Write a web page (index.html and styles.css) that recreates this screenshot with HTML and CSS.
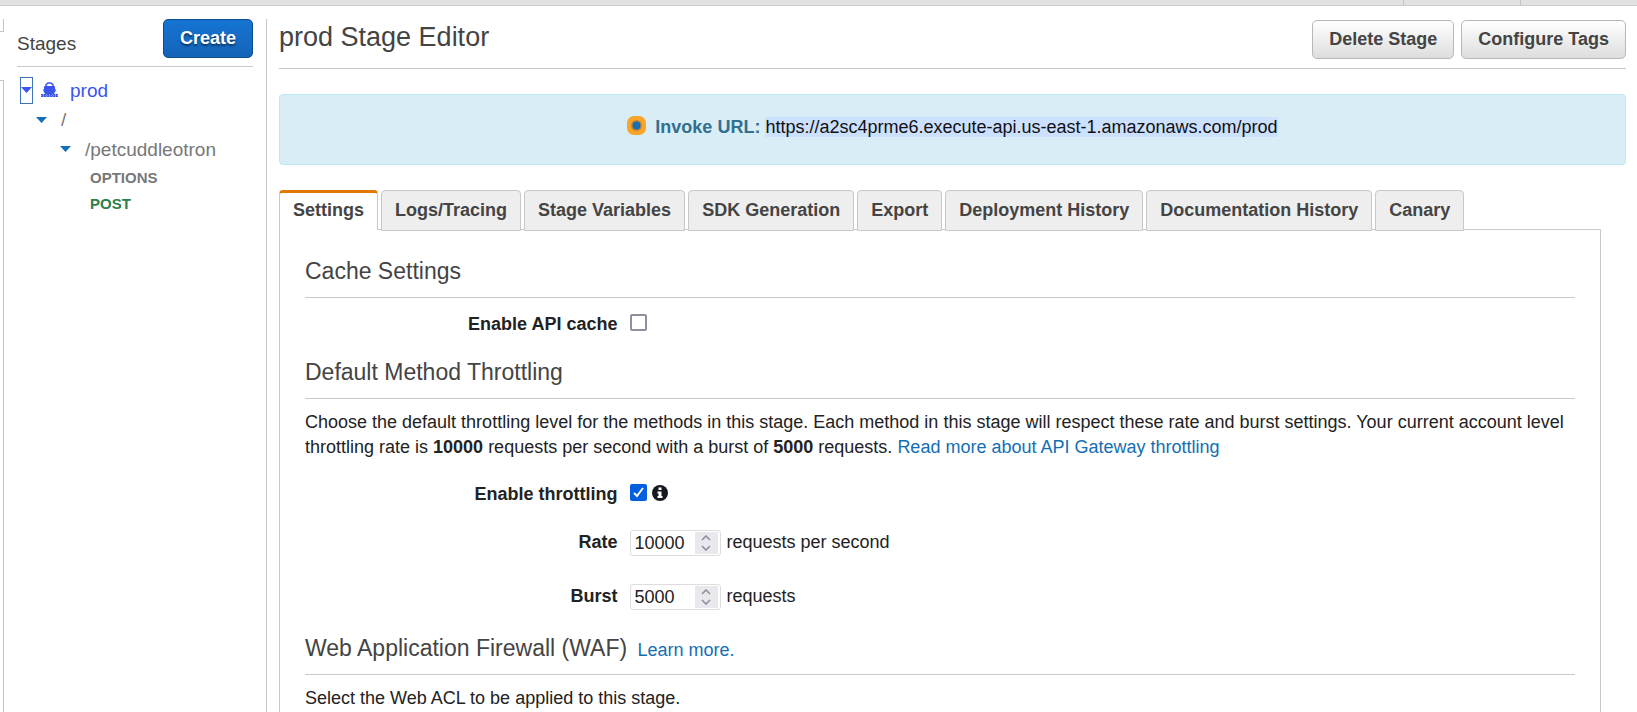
FILE: index.html
```html
<!DOCTYPE html>
<html lang="en">
<head>
<meta charset="utf-8">
<title>prod Stage Editor</title>
<link rel="stylesheet" href="styles.css">
</head>
<body>
<header class="topbar"><span class="topbar-cell"></span><span class="topbar-cell topbar-last"></span></header>
<div class="layout">
  <div class="rail"><div class="rail-top"></div><div class="rail-bottom"></div></div>
  <aside class="sidebar">
    <div class="sidebar-head">
      <h2 class="sidebar-title">Stages</h2>
      <button class="btn btn-primary" type="button">Create</button>
    </div>
    <ul class="tree">
      <li class="node node-stage">
        <button class="toggle toggle-focus" type="button" aria-label="Collapse prod"><svg width="11" height="6" viewBox="0 0 11 6"><path d="M0 0h11L5.5 6z" fill="#3b54ee"/></svg></button>
        <svg class="ship" width="17" height="16" viewBox="0 0 17 16"><path d="M5 4V3q0-1 1-1l1-1h3l1 1q1 0 1 1v1" fill="none" stroke="#3b54ee" stroke-width="1.500"/><path d="M3 5q0-1 1-1h9q1 0 1 1v2l1 1-2 4H4L2 8l1-1z" fill="#3b54ee"/><path d="M0 12h17v3H0z" fill="#8e9df5"/><path d="M0 12.500h17M0 14.500h17" stroke="#3b54ee" stroke-dasharray="2 1"/><path d="M1 13.500h16" stroke="#3b54ee" stroke-dasharray="1 1"/></svg>
        <a class="stage-link" href="#prod">prod</a>
      </li>
      <li class="node node-root">
        <button class="toggle" type="button" aria-label="Collapse root"><svg width="11" height="6" viewBox="0 0 11 6"><path d="M0 0h11L5.5 6z" fill="#146eb4"/></svg></button>
        <a class="path-link" href="#root">/</a>
      </li>
      <li class="node node-resource">
        <button class="toggle" type="button" aria-label="Collapse petcuddleotron"><svg width="11" height="6" viewBox="0 0 11 6"><path d="M0 0h11L5.5 6z" fill="#146eb4"/></svg></button>
        <a class="path-link" href="#petcuddleotron">/petcuddleotron</a>
      </li>
      <li class="node node-method"><a class="method" href="#options">OPTIONS</a></li>
      <li class="node node-method"><a class="method method-post" href="#post">POST</a></li>
    </ul>
  </aside>
  <main class="main">
    <div class="main-head">
      <h1 class="title">prod Stage Editor</h1>
      <div class="actions">
        <button class="btn" type="button">Delete Stage</button>
        <button class="btn" type="button">Configure Tags</button>
      </div>
    </div>
    <div class="notice">
      <svg class="notice-icon" width="19" height="19" viewBox="0 0 19 19"><rect width="19" height="19" rx="7" fill="#faa52a"/><circle cx="9.500" cy="9.500" r="5.500" fill="#c4872e"/><circle cx="9.500" cy="9.500" r="4" fill="#146eb4"/></svg>
      <strong class="notice-label">Invoke URL:</strong>
      <span class="notice-url">https://a2sc4prme6.execute-api.us-east-1.amazonaws.com/prod</span>
    </div>
    <div class="tabs" role="tablist">
      <button class="tab tab-active" type="button" role="tab" aria-selected="true">Settings</button>
      <button class="tab" type="button" role="tab">Logs/Tracing</button>
      <button class="tab" type="button" role="tab">Stage Variables</button>
      <button class="tab" type="button" role="tab">SDK Generation</button>
      <button class="tab" type="button" role="tab">Export</button>
      <button class="tab" type="button" role="tab">Deployment History</button>
      <button class="tab" type="button" role="tab">Documentation History</button>
      <button class="tab" type="button" role="tab">Canary</button>
    </div>
    <section class="panel" role="tabpanel">
      <h3 class="section-title">Cache Settings</h3>
      <div class="row row-cache">
        <label class="label" for="cache">Enable API cache</label>
        <input class="check" id="cache" type="checkbox">
      </div>
      <h3 class="section-title">Default Method Throttling</h3>
      <p class="text">Choose the default throttling level for the methods in this stage. Each method in this stage will respect these rate and burst settings. Your current account level throttling rate is <strong>10000</strong> requests per second with a burst of <strong>5000</strong> requests. <a class="link" href="#throttling">Read more about API Gateway throttling</a></p>
      <div class="row row-throttle">
        <label class="label" for="throttle">Enable throttling</label>
        <input class="check" id="throttle" type="checkbox" checked>
        <svg class="info" width="16" height="16" viewBox="0 0 16 16"><circle cx="8" cy="8" r="8" fill="#16191f"/><path d="M6.500 2.500h3v2.500h-3zM5.500 6.500h4V11h1v2h-5v-2h1V8.500h-1z" fill="#fff"/></svg>
      </div>
      <div class="row row-number">
        <label class="label" for="rate">Rate</label>
        <span class="number"><input class="number-input" id="rate" type="number" value="10000"><span class="spinner"><svg width="10" height="16" viewBox="0 0 10 16"><path d="M1 5l4-4 4 4M1 11l4 4 4-4" fill="none" stroke="#8f8f9d" stroke-width="1.600"/></svg></span></span>
        <span class="unit">requests per second</span>
      </div>
      <div class="row row-number row-last">
        <label class="label" for="burst">Burst</label>
        <span class="number"><input class="number-input" id="burst" type="number" value="5000"><span class="spinner"><svg width="10" height="16" viewBox="0 0 10 16"><path d="M1 5l4-4 4 4M1 11l4 4 4-4" fill="none" stroke="#8f8f9d" stroke-width="1.600"/></svg></span></span>
        <span class="unit">requests</span>
      </div>
      <h3 class="section-title">Web Application Firewall (WAF) <a class="link learn" href="#waf">Learn more.</a></h3>
      <p class="text">Select the Web ACL to be applied to this stage.</p>
    </section>
  </main>
</div>
</body>
</html>
```
FILE: styles.css
```css
* { box-sizing: border-box; }

body {
  margin: 0;
  display: flex;
  flex-direction: column;
  overflow: hidden;
  height: 100vh;
  background: #fff;
  color: #222;
  font: 18px/25px "Liberation Sans", Arial, sans-serif;
}

h1, h2, h3, p, ul { margin: 0; padding: 0; font-weight: normal; }
button, input { font: inherit; color: inherit; }
a { text-decoration: none; }
svg { display: block; flex: none; }

.topbar {
  flex: none;
  display: flex;
  justify-content: flex-end;
  height: 6px;
  background: #e1e1e1;
  border-bottom: 1px solid #ccc;
}
.topbar-cell { width: 117px; border-left: 1px solid #c4c4c4; }

.layout { flex: 1; min-height: 0; display: flex; padding-top: 13px; }

.rail { flex: none; width: 4px; display: flex; flex-direction: column; gap: 48px; }
.rail-top { height: 13px; border: solid #c4c4c4; border-width: 0 1px 1px 0; }
.rail-bottom { flex: 1; border: solid #c4c4c4; border-width: 1px 1px 0 0; }

.sidebar {
  flex: none;
  width: 263px;
  padding: 0 13px;
  border-right: 1px solid #c4c4c4;
}
.sidebar-head {
  display: flex;
  justify-content: space-between;
  height: 48px;
  border-bottom: 1px solid #c8c8c8;
}
.sidebar-title { padding-top: 12px; color: #444; font-size: 19px; line-height: 25px; }

.btn {
  height: 39px;
  padding: 0 16px;
  border: 1px solid #b8b8b8;
  border-radius: 5px;
  background: linear-gradient(#fff, #ddd);
  color: #444;
  font-weight: bold;
}
.btn-primary {
  border-color: #0f4d8a;
  background: linear-gradient(#1574d3, #1464b8);
  color: #fff;
  text-shadow: 0 2px 2px #0a3560;
}

.tree { list-style: none; padding-top: 8px; font-size: 19px; }
.node { display: flex; align-items: center; height: 30px; }
.node-stage { padding-left: 3px; }
.node-root { height: 29px; padding-left: 18px; }
.node-resource { padding-left: 42px; }
.node-method { height: 26px; padding-left: 73px; }
.toggle {
  display: flex;
  align-items: center;
  justify-content: center;
  width: 13px;
  height: 27px;
  padding: 0;
  border: 0;
  background: none;
}
.toggle-focus { border: 1px solid #3d74b5; }
.ship { margin-left: 8px; }
.stage-link { margin-left: 12px; color: #3b54ee; }
.path-link { margin-left: 13px; color: #777; }
.method { font-size: 15px; font-weight: bold; color: #777; }
.method-post { color: #2e8049; }

.main { flex: 1; min-width: 0; display: flex; flex-direction: column; padding: 1px 11px 0 12px; }
.main-head {
  flex: none;
  display: flex;
  justify-content: space-between;
  height: 49px;
  border-bottom: 1px solid #c8c8c8;
}
.title { font-size: 27px; line-height: 34px; color: #444; }
.actions { display: flex; gap: 7px; }

.notice {
  flex: none;
  display: flex;
  justify-content: center;
  gap: 5px;
  height: 71px;
  margin-top: 25px;
  padding-top: 20px;
  border: 1px solid #bce8f1;
  border-radius: 4px;
  background: #d9edf7;
}
.notice-icon { margin: 1px 4px 0 0; }
.notice-label { color: #31708f; }
.notice-url { height: 20px; margin-top: 2px; color: #111; line-height: 21px; background: #cce0ff; }

.tabs { flex: none; display: flex; gap: 3px; margin-top: 25px; }
.tab {
  z-index: 1;
  height: 41px;
  margin-bottom: -2px;
  padding: 0 13px;
  border: 1px solid #c8c8c8;
  border-radius: 4px 4px 0 0;
  background: #eee;
  color: #444;
  font-weight: bold;
  white-space: nowrap;
}
.tab-active {
  height: 40px;
  margin-bottom: -1px;
  padding-bottom: 2px;
  border-top: 3px solid #e07700;
  border-bottom: 0;
  background: #fff;
}

.panel {
  flex: 1;
  min-height: 0;
  margin-right: 25px;
  padding: 23px 25px 0;
  border: 1px solid #c8c8c8;
  border-bottom: 0;
}
.section-title {
  height: 45px;
  border-bottom: 1px solid #c8c8c8;
  color: #444;
  font-size: 23px;
  line-height: 36px;
}
.text { padding-top: 11px; }
.link { color: #146eb4; }
.learn { margin-left: 4px; font-size: 18px; }

.row { display: flex; align-items: center; }
.row-cache { height: 56px; padding-bottom: 4px; }
.row-throttle { height: 69px; }
.row-number { height: 54px; align-items: flex-start; padding-top: 1px; }
.row-last { height: 47px; }
.label { width: 25%; padding-right: 5px; font-weight: bold; text-align: right; }
.check {
  appearance: none;
  width: 17px;
  height: 17px;
  margin: 0 0 4px 7px;
  border: 2px solid #8f8f9d;
  border-radius: 2px;
  background: #fff;
}
.check:checked {
  border: 0;
  background: #0060df url("data:image/svg+xml,%3Csvg xmlns='http://www.w3.org/2000/svg' viewBox='0 0 17 17'%3E%3Cpath d='M4 9l3 3 6-8' fill='none' stroke='white' stroke-width='2'/%3E%3C/svg%3E");
}
.info { margin: 0 0 4px 5px; }
.number {
  display: flex;
  width: 91px;
  height: 26px;
  margin-left: 7px;
  padding: 1px 2px 1px 0;
  border: 1px solid #ddd;
  border-radius: 3px;
}
.number-input {
  flex: 1;
  min-width: 0;
  padding: 0 0 0 4px;
  border: 0;
  background: none;
  outline: 0;
  appearance: textfield;
}
.number-input::-webkit-inner-spin-button { appearance: none; margin: 0; }
.spinner { flex: none; width: 23px; display: grid; place-items: center; background: #e9e9ed; }
.unit { margin-left: 6px; }
```
